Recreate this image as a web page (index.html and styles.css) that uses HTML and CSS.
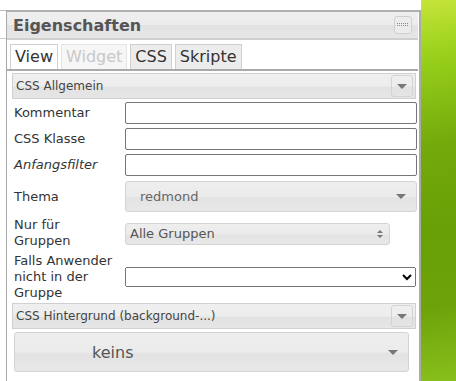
FILE: index.html
```html
<!DOCTYPE html>
<html lang="de">
<head>
    <meta charset="UTF-8">
    <title>Eigenschaften</title>
    <link rel="stylesheet" href="styles.css">
</head>
<body>
<div class="desk">
    <div class="main">
        <div class="side">
            <div class="side-head"></div>
        </div>
        <div class="panel">
            <div class="panel-head">
                <span>Eigenschaften</span>
                <button class="head-btn">
                    <svg width="12" height="4" viewBox="0 0 12 4">
                        <g fill="#888">
                            <rect x="0" y="0" width="1" height="1"/><rect x="2" y="0" width="1" height="1"/><rect x="4" y="0" width="1" height="1"/><rect x="6" y="0" width="1" height="1"/><rect x="8" y="0" width="1" height="1"/><rect x="10" y="0" width="1" height="1"/>
                            <rect x="0" y="2" width="1" height="1"/><rect x="2" y="2" width="1" height="1"/><rect x="4" y="2" width="1" height="1"/><rect x="6" y="2" width="1" height="1"/><rect x="8" y="2" width="1" height="1"/><rect x="10" y="2" width="1" height="1"/>
                        </g>
                    </svg>
                </button>
            </div>
            <ul class="tabs">
                <li class="active">View</li>
                <li class="disabled">Widget</li>
                <li>CSS</li>
                <li>Skripte</li>
            </ul>
            <div class="group">
                <span>CSS Allgemein</span>
                <span class="group-btn"><i class="tri"></i></span>
            </div>
            <div class="form">
                <label>Kommentar</label>
                <input type="text" class="field" value="">
                <label>CSS Klasse</label>
                <input type="text" class="field" value="">
                <label><em>Anfangsfilter</em></label>
                <input type="text" class="field" value="">
                <label>Thema</label>
                <div class="menu theme">
                    <span>redmond</span>
                    <i class="tri"></i>
                </div>
                <label>Nur für<br>Gruppen</label>
                <div class="menu groups">
                    <span>Alle Gruppen</span>
                    <i class="updown"></i>
                </div>
                <label>Falls Anwender<br>nicht in der<br>Gruppe</label>
                <select class="native">
                    <option></option>
                </select>
            </div>
            <div class="group">
                <span>CSS Hintergrund (background-...)</span>
                <span class="group-btn"><i class="tri"></i></span>
            </div>
            <div class="menu big">
                <span>keins</span>
                <i class="tri"></i>
            </div>
        </div>
    </div>
    <div class="green"></div>
</div>
</body>
</html>
```

FILE: styles.css
```css
body{
    margin: 0;
    background: #fff;
    font-family: "DejaVu Sans", Verdana, sans-serif;
    color: #333;
}
.desk{
    display: flex;
    height: 381px;
    overflow: hidden;
}
.main{
    flex: 1;
    display: flex;
    padding-top: 10px;
}
.side{
    width: 6px;
}
.side-head{
    height: 27px;
    border-top: 1px solid #bbb;
    border-bottom: 1px solid #ccc;
}
.panel{
    flex: 1;
    border-left: 1px solid #aaa;
    border-right: 2px solid #aaa;
    border-top: 2px solid #b0b0b0;
    padding-right: 1px;
}
.panel-head{
    display: flex;
    align-items: center;
    justify-content: space-between;
    height: 26px;
    padding: 0 6px 0 6px;
    background: linear-gradient(#efefef 0%, #ececec 50%, #e2e2e2 52%, #e6e6e6 100%);
    border-bottom: 2px solid #cfcfcf;
    font-weight: bold;
    font-size: 16px;
    color: #555;
}
.head-btn{
    width: 18px;
    height: 18px;
    padding: 0;
    border: 1px solid #d0d0d0;
    border-radius: 3px;
    background: #ececec;
    display: flex;
    align-items: center;
    justify-content: center;
}
.tabs{
    display: flex;
    gap: 3px;
    margin: 0;
    padding: 4px 0 0 3px;
    list-style: none;
    border-bottom: 2px solid #aaa;
}
.tabs li{
    height: 24px;
    padding: 0 4px;
    border: 1px solid #d0d0d0;
    border-bottom: none;
    background: #ececec;
    font-size: 16px;
    line-height: 24px;
    color: #333;
}
.tabs li.active{
    background: #fff;
}
.tabs li.disabled{
    color: #c8c8c8;
    background: #f6f6f6;
    border-color: #e4e4e4;
}
.group{
    display: flex;
    align-items: center;
    justify-content: space-between;
    height: 24px;
    margin: 2px 2px 0 5px;
    padding: 0 2px 0 3px;
    border: 1px solid #d0d0d0;
    background: linear-gradient(#efefef 0%, #ededed 50%, #e2e2e2 55%, #e6e6e6 100%);
    font-size: 12px;
    color: #444;
}
.group-btn{
    width: 20px;
    height: 20px;
    border: 1px solid #d3d3d3;
    border-radius: 3px;
    display: flex;
    align-items: center;
    justify-content: center;
}
.tri{
    display: block;
    width: 0;
    height: 0;
    border-left: 5px solid transparent;
    border-right: 5px solid transparent;
    border-top: 5px solid #777;
}
.updown{
    display: block;
    width: 0;
    height: 0;
    position: relative;
    border-left: 3px solid transparent;
    border-right: 3px solid transparent;
    border-top: 3px solid #777;
    margin-top: 5px;
}
.updown:before{
    content: "";
    position: absolute;
    left: -3px;
    top: -8px;
    border-left: 3px solid transparent;
    border-right: 3px solid transparent;
    border-bottom: 3px solid #777;
}
.form{
    display: grid;
    grid-template-columns: 111px 1fr;
    row-gap: 4px;
    align-items: center;
    padding: 3px 1px 0 7px;
    font-size: 13px;
    line-height: 16px;
}
.form label{
    color: #333;
}
.form em{
    font-style: italic;
}
.field{
    box-sizing: border-box;
    width: 100%;
    height: 22px;
    margin: 0;
    border: 1px solid #767676;
    border-radius: 2px;
}
.menu{
    box-sizing: border-box;
    display: flex;
    align-items: center;
    justify-content: space-between;
    border: 1px solid #d3d3d3;
    border-radius: 3px;
    background: linear-gradient(#eeeeee 0%, #ebebeb 50%, #e3e3e3 55%, #e8e8e8 100%);
    color: #555;
}
.theme{
    height: 31px;
    margin: 1px 0;
    padding: 0 10px 0 14px;
    font-size: 13px;
    color: #666;
}
.groups{
    width: 265px;
    height: 22px;
    padding: 0 6px 0 4px;
    font-size: 13px;
    margin-top: 6px;
    align-self: start;
}
.native{
    width: 291px;
    height: 20px;
    margin-top: 14px;
    align-self: start;
    font-size: 13px;
}
.big{
    height: 40px;
    margin: 3px 9px 8px 7px;
    padding: 0 10px 0 77px;
    font-size: 16px;
}
.green{
    width: 35px;
    background: linear-gradient(172deg, #c6e43a 0%, #9ad21c 14%, #74a90b 38%, #68a006 60%, #6ea20a 80%, #88c01c 100%);
}
```
